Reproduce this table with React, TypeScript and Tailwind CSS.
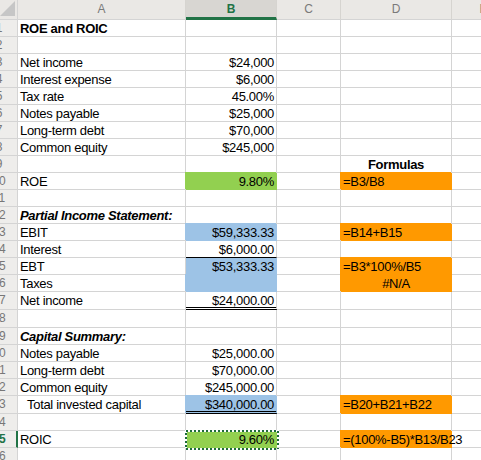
import React from "react";

type Fill = "green" | "blue" | "orange";

type Cell = {
  t?: string;
  al?: "l" | "r" | "c";
  fill?: Fill;
  b?: boolean;
  i?: boolean;
  indent?: boolean;
  line?: "single" | "double";
  nocover?: boolean;
  sel?: boolean;
};

type Row = {
  n: number;
  h?: 18;
  a?: Cell;
  b?: Cell;
  d?: Cell;
  active?: boolean;
};

const fillBg: Record<Fill, string> = {
  green: "bg-[#92d050] border-r-[#92d050]",
  blue: "bg-[#9dc3e6] border-r-[#9dc3e6]",
  orange: "bg-[#ff9900] border-r-[#ff9900]",
};

const fillBottom: Record<Fill, string> = {
  green: "border-b-[#92d050]",
  blue: "border-b-[#9dc3e6]",
  orange: "border-b-[#ff9900]",
};

const fillCover: Record<Fill, string> = {
  green: "shadow-[-1px_-1px_0_0_#92d050]",
  blue: "shadow-[-1px_-1px_0_0_#9dc3e6]",
  orange: "shadow-[-1px_-1px_0_0_#ff9900]",
};

const rows: Row[] = [
  { n: 1, a: { t: "ROE and ROIC", b: true } },
  { n: 2 },
  { n: 3, a: { t: "Net income" }, b: { t: "$24,000", al: "r" } },
  { n: 4, a: { t: "Interest expense" }, b: { t: "$6,000", al: "r" } },
  { n: 5, a: { t: "Tax rate" }, b: { t: "45.00%", al: "r" } },
  { n: 6, a: { t: "Notes payable" }, b: { t: "$25,000", al: "r" } },
  { n: 7, a: { t: "Long-term debt" }, b: { t: "$70,000", al: "r" } },
  { n: 8, a: { t: "Common equity" }, b: { t: "$245,000", al: "r" } },
  { n: 9, d: { t: "Formulas", b: true, al: "c" } },
  {
    n: 10,
    a: { t: "ROE" },
    b: { t: "9.80%", al: "r", fill: "green" },
    d: { t: "=B3/B8", fill: "orange" },
  },
  { n: 11 },
  { n: 12, a: { t: "Partial Income Statement:", b: true, i: true } },
  {
    n: 13,
    a: { t: "EBIT" },
    b: { t: "$59,333.33", al: "r", fill: "blue" },
    d: { t: "=B14+B15", fill: "orange" },
  },
  { n: 14, a: { t: "Interest" }, b: { t: "$6,000.00", al: "r", line: "single" } },
  {
    n: 15,
    a: { t: "EBT" },
    b: { t: "$53,333.33", al: "r", fill: "blue", nocover: true },
    d: { t: "=B3*100%/B5", fill: "orange" },
  },
  {
    n: 16,
    a: { t: "Taxes" },
    b: { fill: "blue" },
    d: { t: "#N/A", al: "c", fill: "orange" },
  },
  { n: 17, h: 18, a: { t: "Net income" }, b: { t: "$24,000.00", al: "r", line: "double" } },
  { n: 18, h: 18 },
  { n: 19, a: { t: "Capital Summary:", b: true, i: true } },
  { n: 20, a: { t: "Notes payable" }, b: { t: "$25,000.00", al: "r" } },
  { n: 21, a: { t: "Long-term debt" }, b: { t: "$70,000.00", al: "r" } },
  { n: 22, a: { t: "Common equity" }, b: { t: "$245,000.00", al: "r" } },
  {
    n: 23,
    h: 18,
    a: { t: "Total invested capital", indent: true },
    b: { t: "$340,000.00", al: "r", fill: "blue", line: "double" },
    d: { t: "=B20+B21+B22", fill: "orange" },
  },
  { n: 24 },
  {
    n: 25,
    active: true,
    a: { t: "ROIC" },
    b: { t: "9.60%", al: "r", fill: "green", sel: true },
    d: { t: "=(100%-B5)*B13/B23", fill: "orange" },
  },
  { n: 26 },
];

const GridCell = ({ c, w }: { c?: Cell; w: string }) => {
  const cell = c || {};
  const right = cell.fill ? fillBg[cell.fill] : "border-r-[#d4d4d4]";
  let bottom = "border-b border-b-[#d4d4d4]";
  if (cell.line === "double") bottom = "border-b-[3px] border-double border-b-black";
  else if (cell.line === "single") bottom = "border-b border-b-black";
  else if (cell.fill) bottom = "border-b " + fillBottom[cell.fill];
  const cover = cell.fill && !cell.nocover ? fillCover[cell.fill] : "";
  const align =
    cell.al === "r" ? "text-right" : cell.al === "c" ? "text-center" : "text-left";

  return (
    <div
      className={`${w} shrink-0 h-full box-border border-r relative whitespace-nowrap pt-[2px] leading-[14px] px-[2px] ${right} ${bottom} ${cover} ${align} ${
        cell.b ? "font-bold" : ""
      } ${cell.i ? "italic" : ""} ${cell.indent ? "pl-[9px]" : ""}`}
    >
      {cell.t}
      {cell.sel && (
        <svg
          className="absolute -left-px -top-px pointer-events-none"
          width={94}
          height={20}
        >
          <rect x={1} y={1} width={92} height={18} fill="none" stroke="#ffffff" strokeWidth={2} />
          <rect
            x={1}
            y={1}
            width={92}
            height={18}
            fill="none"
            stroke="#1d6b3a"
            strokeWidth={2}
            strokeDasharray="2 2"
          />
        </svg>
      )}
    </div>
  );
};

const ColHead = ({ label, w, active }: { label: string; w: string; active?: boolean }) => (
  <div
    className={`${w} shrink-0 h-full box-border border-r border-r-[#d6d4d0] text-center leading-[18px] text-[12px] ${
      active
        ? "bg-[#d8d6d2] border-b-[3px] border-b-[#217346] text-[#217346] font-bold"
        : "bg-[#eae8e5] border-b border-b-[#d4d4d4] text-[#7a7a7a]"
    }`}
  >
    {label}
  </div>
);

export default function App() {
  return (
    <div className="w-[481px] h-[460px] overflow-hidden bg-white text-black font-['Liberation_Sans',Arial,sans-serif] text-[13px] tracking-[-0.3px]">
      <div className="flex h-[20px] w-[600px] tracking-normal">
        <div className="w-[18px] shrink-0 h-full box-border border-r border-b border-[#d4d4d4] bg-[#eae8e5] relative">
          <svg className="absolute left-0 top-0" width={17} height={19}>
            <polygon points="0,16 15,1 15,16" fill="#c6c6c6" />
          </svg>
        </div>
        <ColHead label="A" w="w-[168px]" />
        <ColHead label="B" w="w-[91px]" active />
        <ColHead label="C" w="w-[64px]" />
        <ColHead label="D" w="w-[111px]" />
        <ColHead label="E" w="w-[64px]" />
      </div>

      {rows.map((r) => (
        <div key={r.n} className={`flex w-[600px] ${r.h === 18 ? "h-[18px]" : "h-[17px]"}`}>
          <div
            className={`w-[18px] shrink-0 h-full box-border overflow-hidden bg-[#eeedeb] border-b border-b-[#d4d4d4] tracking-normal ${
              r.active ? "border-r-2 border-r-[#217346]" : "border-r border-r-[#d4d4d4]"
            }`}
          >
            <div
              className={`w-[36px] -ml-[19px] text-center text-[12px] leading-[16px] ${
                r.active ? "text-[#217346] font-bold" : "text-[#777777]"
              }`}
            >
              {r.n}
            </div>
          </div>
          <GridCell c={r.a} w="w-[168px]" />
          <GridCell c={r.b} w="w-[91px]" />
          <GridCell w="w-[64px]" />
          <GridCell c={r.d} w="w-[111px]" />
          <GridCell w="w-[64px]" />
        </div>
      ))}
    </div>
  );
}
